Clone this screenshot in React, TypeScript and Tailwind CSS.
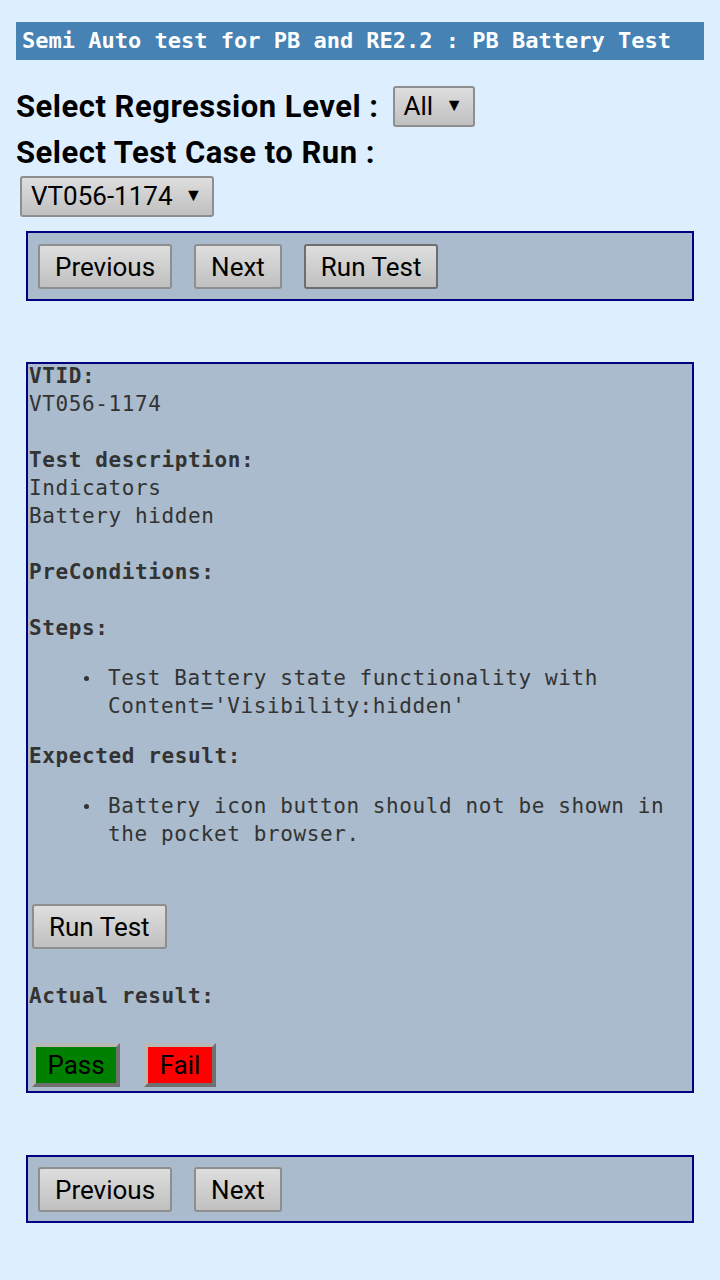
import React from 'react';

const mono = { fontFamily: '"DejaVu Sans Mono", "Liberation Mono", monospace' };
const sans = { fontFamily: 'Roboto, "Liberation Sans", sans-serif' };

function Btn({ label, dark }: { label: string; dark?: boolean }) {
  return (
    <button
      style={sans}
      className={
        'h-[45px] px-[15px] rounded-[3px] border-2 bg-gradient-to-b from-[#dedede] to-[#c0c0c0] text-[26px] text-black leading-none font-normal tracking-normal ' +
        (dark ? 'border-[#6e6e6e]' : 'border-[#8e8e8e]')
      }
    >
      {label}
    </button>
  );
}

function Select({ value }: { value: string }) {
  return (
    <div
      style={sans}
      className="inline-flex items-center h-[41px] pl-[9px] pr-[10px] gap-[12px] rounded-[3px] border-2 border-[#8e8e8e] bg-gradient-to-b from-[#dedede] to-[#c0c0c0] text-[26px] font-normal text-black tracking-normal"
    >
      <span>{value}</span>
      <span className="text-[18px] -mt-[5px]">▼</span>
    </div>
  );
}

function Line({ children, bold }: { children?: React.ReactNode; bold?: boolean }) {
  return <div className={'h-[28px] leading-[28px] whitespace-pre ' + (bold ? 'font-bold' : '')}>{children}</div>;
}

function Bullet({ lines }: { lines: string[] }) {
  return (
    <div className="flex">
      <div className="w-[79px] h-[28px] flex items-center justify-end pr-[19px]">
        <span className="block w-[5px] h-[5px] rounded-full bg-[#333]" />
      </div>
      <div>
        {lines.map(l => (
          <Line key={l}>{l}</Line>
        ))}
      </div>
    </div>
  );
}

export default function App() {
  return (
    <div className="min-h-[1280px] bg-[#ddeeff] px-[16px] pt-[22px] pb-[40px]">
      <div
        style={mono}
        className="h-[38px] bg-[#4682b4] text-white text-[22px] leading-[38px] pl-[6px] font-bold"
      >
        Semi Auto test for PB and RE2.2 : PB Battery Test
      </div>

      <div style={sans} className="mt-[26px] h-[41px] flex items-center gap-[14px] text-[31px] leading-[41px] font-bold text-black tracking-[0.5px]">
        <span>Select Regression Level :</span>
        <Select value="All" />
      </div>
      <div style={sans} className="mt-[5px] h-[42px] text-[31px] font-bold text-black leading-[42px] tracking-[0.5px]">
        Select Test Case to Run :
      </div>
      <div className="mt-[2px] ml-[4px] h-[41px]">
        <Select value="VT056-1174" />
      </div>

      <div className="mt-[14px] mx-[10px] border-2 border-[#000080] bg-[#a9bbcc] pl-[10px] pt-[11px] pb-[10px] flex gap-[22px]">
        <Btn label="Previous" />
        <Btn label="Next" />
        <Btn label="Run Test" dark />
      </div>

      <div
        style={mono}
        className="mt-[61px] mx-[10px] border-2 border-[#000080] bg-[#a9bbcc] pl-[1px] pb-[4px] text-[21px] text-[#333] tracking-[0.6px]"
      >
        <div className="-mt-[2px]">
          <Line bold>VTID:</Line>
        </div>
        <Line>VT056-1174</Line>
        <Line />
        <Line bold>Test description:</Line>
        <Line>Indicators</Line>
        <Line>Battery hidden</Line>
        <Line />
        <Line bold>PreConditions:</Line>
        <Line />
        <Line bold>Steps:</Line>
        <div className="mt-[22px]">
          <Bullet lines={['Test Battery state functionality with', "Content='Visibility:hidden'"]} />
        </div>
        <div className="mt-[22px]">
          <Line bold>Expected result:</Line>
        </div>
        <div className="mt-[22px]">
          <Bullet lines={['Battery icon button should not be shown in', 'the pocket browser.']} />
        </div>
        <div className="mt-[56px] pl-[3px]">
          <Btn label="Run Test" />
        </div>
        <div className="mt-[33px]">
          <Line bold>Actual result:</Line>
        </div>
        <div style={sans} className="mt-[33px] pl-[3px] flex gap-[24px] text-[26px] text-black tracking-normal">
          <button className="h-[44px] w-[88px] bg-[#008000] border-[4px] border-t-[#b8b8b8] border-l-[#b8b8b8] border-r-[#707070] border-b-[#707070] leading-none">
            Pass
          </button>
          <button className="h-[44px] w-[72px] bg-[#ff0000] border-[4px] border-t-[#b8b8b8] border-l-[#b8b8b8] border-r-[#707070] border-b-[#707070] leading-none">
            Fail
          </button>
        </div>
      </div>

      <div className="mt-[62px] mx-[10px] border-2 border-[#000080] bg-[#a9bbcc] pl-[10px] pt-[10px] pb-[9px] flex gap-[22px]">
        <Btn label="Previous" />
        <Btn label="Next" />
      </div>
    </div>
  );
}
